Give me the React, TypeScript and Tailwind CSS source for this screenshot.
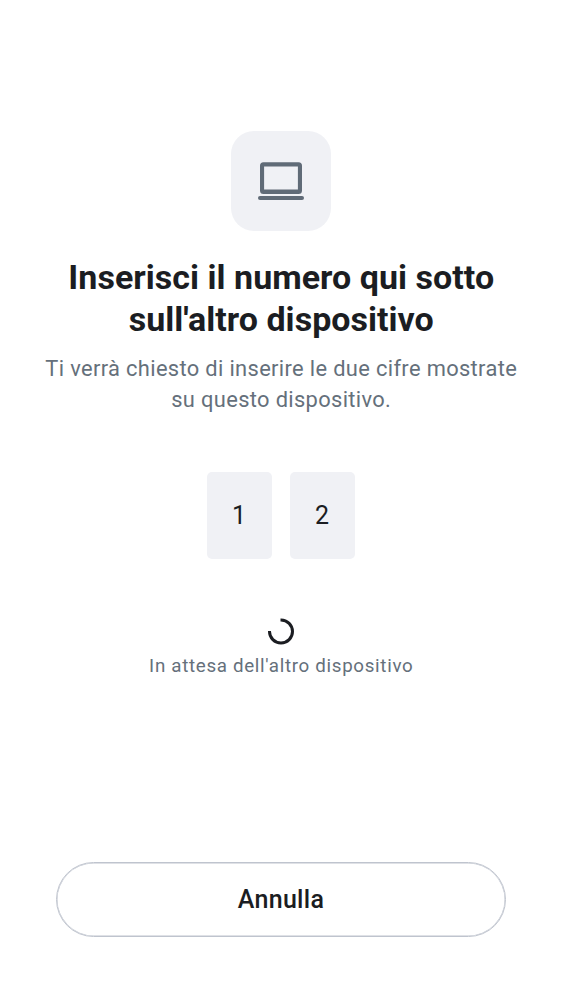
export default function App() {
  return (
    <main className="flex h-[1000px] w-full flex-col items-center bg-white pt-[131px] font-['Roboto',sans-serif] text-[#1b1d22]">
      <div className="flex size-[100px] shrink-0 items-center justify-center rounded-[23px] bg-[#f0f1f5]">
        <svg width="46" height="38" viewBox="0 0 46 38" fill="#606b77">
          <path fillRule="evenodd" d="M5.5 0.3H40.5Q44 0.3 44 3.8V28.5Q44 32 40.5 32H5.5Q2 32 2 28.5V3.8Q2 0.3 5.5 0.3ZM6.1 4.6V27.6H39.9V4.6Z" />
          <rect y="34" width="46" height="4" rx="2" />
        </svg>
      </div>
      <h1 className="mt-[25px] pl-[0.5px] text-center text-[34px] leading-[42px] font-bold tracking-[0.03px] whitespace-nowrap">
        Inserisci il numero qui sotto<br />sull'altro dispositivo
      </h1>
      <p className="mt-[13px] pl-[0.5px] text-center text-[21.875px] leading-[31px] tracking-[0.35px] whitespace-nowrap text-[#65707b]">
        Ti verrà chiesto di inserire le due cifre mostrate<br />su questo dispositivo.
      </p>
      <div className="mt-[57px] flex gap-[18px] text-[25px]">
        <div className="flex h-[87px] w-[65px] items-center justify-center rounded-[5px] bg-[#f0f1f5] pr-px">1</div>
        <div className="flex h-[87px] w-[65px] items-center justify-center rounded-[5px] bg-[#f0f1f5] pr-px">2</div>
      </div>
      <svg className="mt-[59px]" width="26" height="27" viewBox="0 -0.5 26 27" fill="none">
        <path d="M12.5 1.5H13A11.5 11.5 0 1 1 1.5 13V12.5" stroke="#1b1d22" strokeWidth="3" />
      </svg>
      <p className="mt-[9px] pl-[0.5px] text-[18.75px] leading-[25px] tracking-[0.68px] text-[#65707b]">In attesa dell'altro dispositivo</p>
      <button className="mt-[183px] h-[75px] w-[450px] rounded-full border border-[#bfc4ce] text-[25px] font-medium tracking-[0.3px] shadow-[inset_0_0_0_0.5px_#bfc4ce]">Annulla</button>
    </main>
  );
}
